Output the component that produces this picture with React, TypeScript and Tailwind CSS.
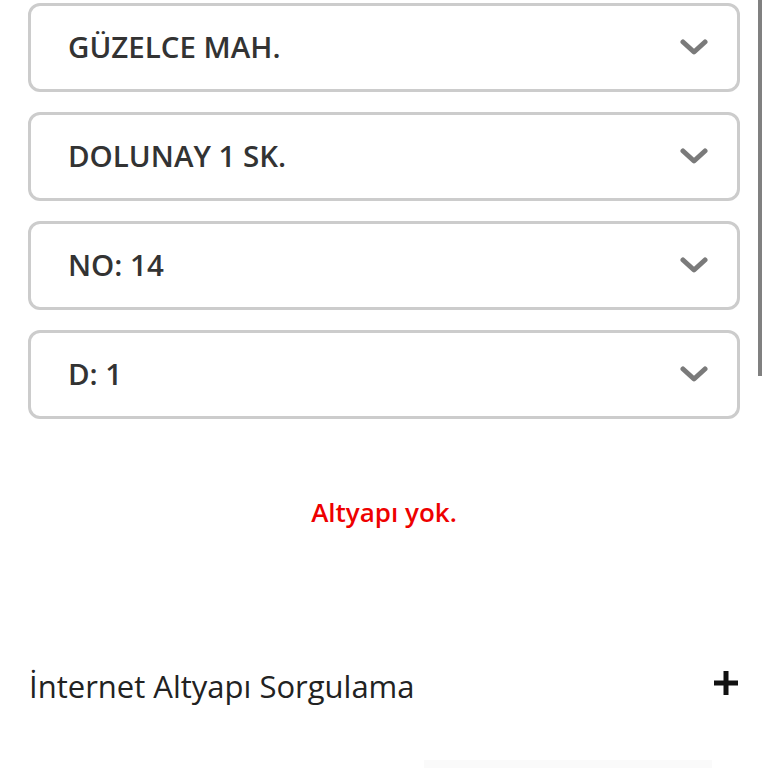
import React from "react";

const items = ["GÜZELCE MAH.", "DOLUNAY 1 SK.", "NO: 14", "D: 1"];

const Chevron: React.FC = () => (
  <svg width="28" height="18" viewBox="0 0 28 18" fill="none">
    <path d="M3 3 L14 13 L25 3" stroke="#7a7a7a" strokeWidth="5" strokeLinecap="round" strokeLinejoin="round" />
  </svg>
);

const App: React.FC = () => {
  return (
    <div className="relative w-[768px] h-[768px] overflow-hidden bg-white" style={{ fontFamily: "'Open Sans', 'Liberation Sans', sans-serif" }}>
      <div className="flex flex-col gap-[20px] pt-[3px] pl-[28px] w-[740px]">
        {items.map((label) => (
          <div key={label} className="flex items-center justify-between h-[89px] border-[3px] border-[#cccccc] rounded-[12px] pl-[37px] pr-[29px]">
            <span className="text-[29.5px] font-semibold text-[#333333]">{label}</span>
            <Chevron />
          </div>
        ))}
      </div>

      <div className="flex justify-center pt-[74px]">
        <span className="text-[26px] font-semibold text-[#ee0000]">Altyapı yok.</span>
      </div>

      <div className="flex items-center justify-between pt-[128px] pl-[29px] pr-[29px]">
        <span className="text-[31px] font-normal text-[#222222] translate-y-[3px]">İnternet Altyapı Sorgulama</span>
        <svg width="26" height="26" viewBox="0 0 26 26">
          <rect x="10.5" y="1" width="5" height="24" fill="#111" />
          <rect x="1" y="10.5" width="24" height="5" fill="#111" />
        </svg>
      </div>

      <div className="absolute left-[424px] top-[760px] w-[288px] h-[8px] bg-[#fafafa]" />
      <div className="absolute right-[6px] top-0 w-[4px] h-[376px] bg-[#808080]" />
    </div>
  );
};

export default App;
